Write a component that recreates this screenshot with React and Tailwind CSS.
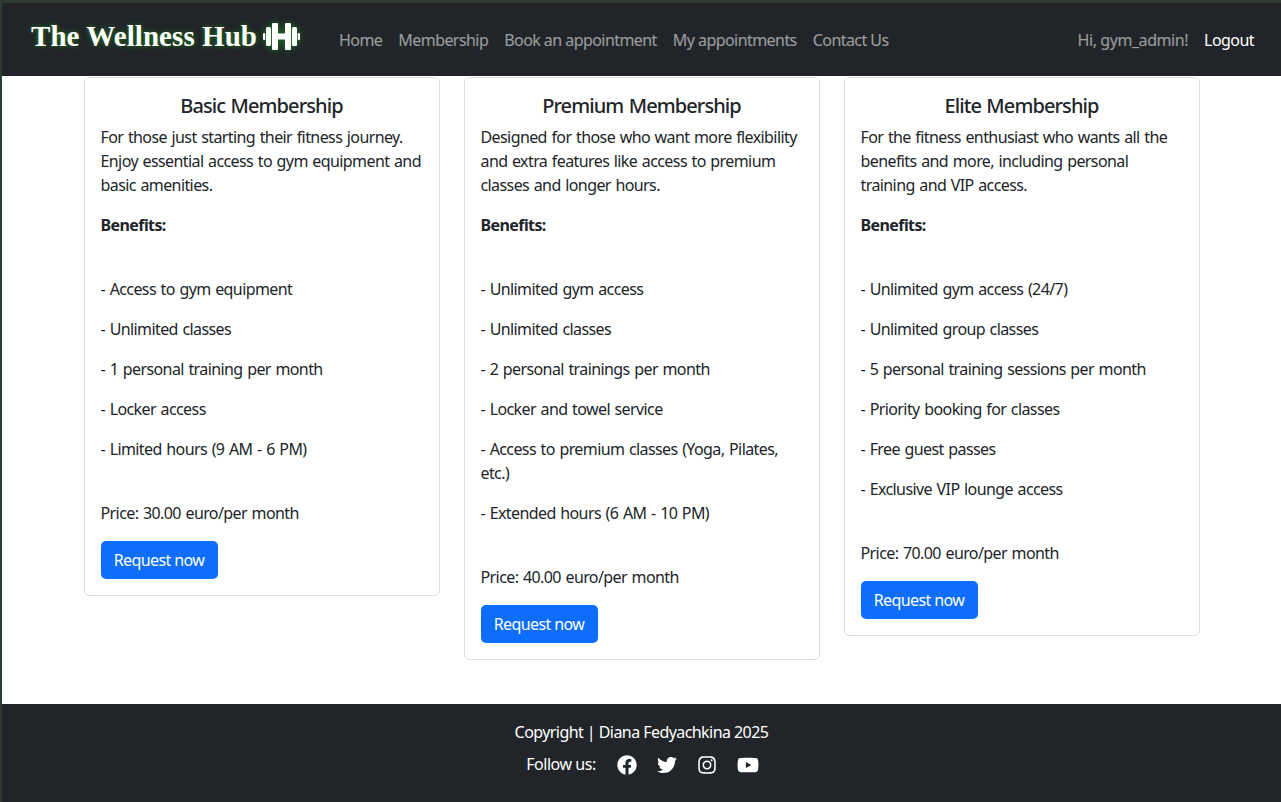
import React from "react";
import { FaFacebook, FaTwitter, FaInstagram, FaYoutube } from "react-icons/fa";

const plans = [
  {
    name: "Basic Membership",
    intro: [
      "For those just starting their fitness journey.",
      "Enjoy essential access to gym equipment and",
      "basic amenities.",
    ],
    benefits: [
      "- Access to gym equipment",
      "- Unlimited classes",
      "- 1 personal training per month",
      "- Locker access",
      "- Limited hours (9 AM - 6 PM)",
    ],
    price: "30.00",
  },
  {
    name: "Premium Membership",
    intro: [
      "Designed for those who want more flexibility",
      "and extra features like access to premium",
      "classes and longer hours.",
    ],
    benefits: [
      "- Unlimited gym access",
      "- Unlimited classes",
      "- 2 personal trainings per month",
      "- Locker and towel service",
      "- Access to premium classes (Yoga, Pilates, etc.)",
      "- Extended hours (6 AM - 10 PM)",
    ],
    price: "40.00",
  },
  {
    name: "Elite Membership",
    intro: [
      "For the fitness enthusiast who wants all the",
      "benefits and more, including personal",
      "training and VIP access.",
    ],
    benefits: [
      "- Unlimited gym access (24/7)",
      "- Unlimited group classes",
      "- 5 personal training sessions per month",
      "- Priority booking for classes",
      "- Free guest passes",
      "- Exclusive VIP lounge access",
    ],
    price: "70.00",
  },
];

const navLinks = ["Home", "Membership", "Book an appointment", "My appointments", "Contact Us"];

const Dumbbell = () => (
  <svg width="37" height="27" viewBox="0 0 37 27" fill="white" className="ml-[6px] drop-shadow-[0_0_3px_#1f7a1f]">
    <rect x="0" y="10" width="2.3" height="7" rx="1" />
    <rect x="3" y="4" width="5" height="19" rx="1.5" />
    <rect x="9" y="0" width="6" height="27" rx="1" />
    <rect x="15" y="10.5" width="7" height="6" />
    <rect x="22" y="0" width="6" height="27" rx="1" />
    <rect x="29" y="4" width="5" height="19" rx="1.5" />
    <rect x="34.7" y="10" width="2.3" height="7" rx="1" />
  </svg>
);

const PlanCard = ({ plan }) => (
  <div className="w-[356px] rounded-[5px] border border-[#dfdfdf] bg-white p-4 tracking-[-0.037em] [word-spacing:1px]">
    <h5 className="mb-[7px] text-center text-xl leading-6 font-medium tracking-[-0.045em] text-[#212529]">{plan.name}</h5>
    <p className="mb-4">
      {plan.intro.map((line) => (
        <span key={line} className="block">
          {line}
        </span>
      ))}
    </p>
    <p className="mb-4 font-bold">Benefits:</p>
    <div className="h-6" />
    {plan.benefits.map((b) => (
      <p key={b} className="mb-4">
        {b}
      </p>
    ))}
    <div className="h-6" />
    <p className="mb-4">Price: {plan.price} euro/per month</p>
    <button className="h-[38px] w-[117px] rounded-[5px] bg-[#0d6efd] text-white">Request now</button>
  </div>
);

const App = () => {
  return (
    <div className="min-h-[802px] border-t-[3px] border-l-2 border-[#2f3b2f] bg-white font-['Noto_Sans',sans-serif] text-base leading-6 tracking-[-0.028em] text-[#212529]">
      <nav className="flex h-[73px] items-center bg-[#212529] pr-[27px] pl-[29px]">
        <div className="mb-[6px] flex items-center">
          <span className="font-['Liberation_Serif',serif] text-[29px] leading-none font-bold tracking-[0.002em] text-white [text-shadow:0_0_5px_#1f7a1f]">
            The Wellness Hub
          </span>
          <Dumbbell />
        </div>
        <div className="mt-px ml-[39px] flex gap-4 tracking-[-0.035em] text-white/55">
          {navLinks.map((l) => (
            <a key={l} href="#">
              {l}
            </a>
          ))}
        </div>
        <div className="mt-px ml-auto flex gap-4">
          <span className="tracking-[-0.027em] text-white/55">Hi, gym_admin!</span>
          <a href="#" className="tracking-[-0.035em] text-white">
            Logout
          </a>
        </div>
      </nav>

      <main className="mb-11 flex items-start justify-center gap-6 pt-px">
        {plans.map((p) => (
          <PlanCard key={p.name} plan={p} />
        ))}
      </main>

      <footer className="flex h-[98px] flex-col items-center bg-[#212529] pt-4 text-white">
        <p className="tracking-[-0.035em]">Copyright | Diana Fedyachkina 2025</p>
        <div className="mt-2 flex items-center pl-[2px]">
          <span>Follow us:</span>
          <div className="mt-px ml-[21px] flex items-center gap-5">
            <FaFacebook size={20} />
            <FaTwitter size={20} />
            <FaInstagram size={20} />
            <FaYoutube size={22} />
          </div>
        </div>
      </footer>
    </div>
  );
};

export default App;
